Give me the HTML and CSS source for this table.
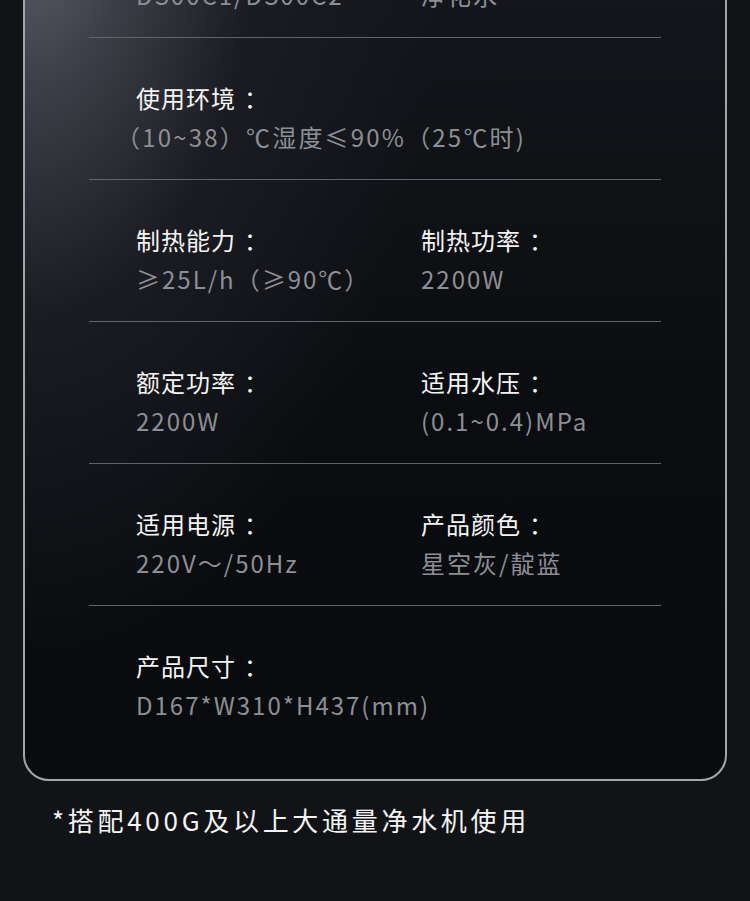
FILE: index.html
```html
<!DOCTYPE html>
<html lang="zh">
<head>
<meta charset="utf-8">
<link rel="stylesheet" href="styles.css">
</head>
<body>
<main class="page">
  <section class="card">
    <div class="row">
      <div class="cell"><div class="label">产品型号<span class="colon">：</span></div><div class="value">DS00C1/DS00C2</div></div>
      <div class="cell"><div class="label">出水类型<span class="colon">：</span></div><div class="value">净化水</div></div>
    </div>
    <div class="row">
      <div class="cell wide"><div class="label">使用环境<span class="colon">：</span></div><div class="value tight">（10~38）℃湿度≤90%（25℃时)</div></div>
    </div>
    <div class="row">
      <div class="cell"><div class="label">制热能力<span class="colon">：</span></div><div class="value">≥25L/h（≥90℃）</div></div>
      <div class="cell"><div class="label">制热功率<span class="colon">：</span></div><div class="value">2200W</div></div>
    </div>
    <div class="row">
      <div class="cell"><div class="label">额定功率<span class="colon">：</span></div><div class="value">2200W</div></div>
      <div class="cell"><div class="label">适用水压<span class="colon">：</span></div><div class="value">(0.1~0.4)MPa</div></div>
    </div>
    <div class="row">
      <div class="cell"><div class="label">适用电源<span class="colon">：</span></div><div class="value">220V～/50Hz</div></div>
      <div class="cell"><div class="label">产品颜色<span class="colon">：</span></div><div class="value">星空灰/靛蓝</div></div>
    </div>
    <div class="row last">
      <div class="cell wide"><div class="label">产品尺寸<span class="colon">：</span></div><div class="value">D167*W310*H437(mm)</div></div>
    </div>
  </section>
  <p class="note">*搭配400G及以上大通量净水机使用</p>
</main>
</body>
</html>
```
FILE: styles.css
```css
html, body {
  margin: 0;
  padding: 0;
  background: #121317;
  height: 100%;
  overflow: hidden;
}
body {
  font-family: "Noto Sans CJK SC", "Noto Sans", sans-serif;
  color: #f2f2f2;
}
.page {
  padding: 0 23px;
}
.card {
  margin-top: -103px;
  padding: 40px 64px 32px;
  border: 2px solid #a3a5a9;
  border-radius: 26px;
  background:
    radial-gradient(ellipse 420px 760px at 0 0, #62666f 0%, #3c3f47 25%, #1b1c22 55%, rgba(11,12,16,0) 100%),
    linear-gradient(180deg, #17181d 0%, #0b0c10 60%, #0a0b0e 100%);
}
.row {
  display: grid;
  grid-template-columns: 285px 1fr;
  padding: 43px 0 25px 47px;
  border-top: 1px solid #606368;
}
.row:first-child {
  border-top: none;
  padding-top: 0;
}
.cell.wide {
  grid-column: 1 / -1;
}
.label {
  font-size: 24px;
  line-height: 34px;
  letter-spacing: 1px;
  color: #f4f4f4;
}
.colon {
  margin-left: 8px;
}
.value {
  margin-top: 5px;
  font-size: 24px;
  line-height: 34px;
  letter-spacing: 2px;
  color: #8d8f94;
}
.value.tight {
  margin-left: -20px;
  letter-spacing: 2.2px;
}
.note {
  margin: 19px 0 0 29px;
  font-size: 26px;
  line-height: 40px;
  letter-spacing: 3.7px;
  color: #f4f4f4;
}
```
